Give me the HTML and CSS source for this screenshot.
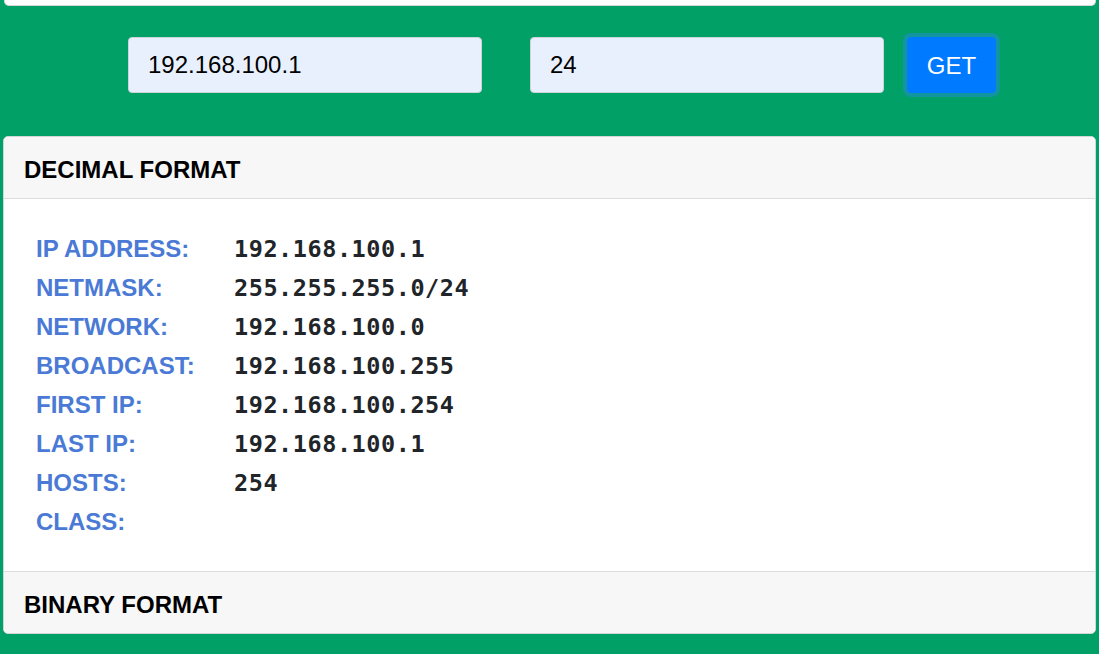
FILE: index.html
```html
<!DOCTYPE html>
<html lang="en">
<head>
<meta charset="utf-8">
<title>IP Calculator</title>
<link rel="stylesheet" href="styles.css">
</head>
<body>
<div class="page">
  <div class="top-card"></div>
  <form class="ip-form">
    <input class="field" type="text" value="192.168.100.1">
    <input class="field field-mask" type="text" value="24">
    <button class="btn-get" type="button">GET</button>
  </form>
  <div class="card">
    <div class="card-header">DECIMAL FORMAT</div>
    <div class="card-body">
      <div class="row"><span class="label">IP ADDRESS:</span><span class="value">192.168.100.1</span></div>
      <div class="row"><span class="label">NETMASK:</span><span class="value">255.255.255.0/24</span></div>
      <div class="row"><span class="label">NETWORK:</span><span class="value">192.168.100.0</span></div>
      <div class="row"><span class="label">BROADCAST:</span><span class="value">192.168.100.255</span></div>
      <div class="row"><span class="label">FIRST IP:</span><span class="value">192.168.100.254</span></div>
      <div class="row"><span class="label">LAST IP:</span><span class="value">192.168.100.1</span></div>
      <div class="row"><span class="label">HOSTS:</span><span class="value">254</span></div>
      <div class="row"><span class="label">CLASS:</span><span class="value"></span></div>
    </div>
    <div class="card-header card-header-bottom">BINARY FORMAT</div>
  </div>
</div>
</body>
</html>
```

FILE: styles.css
```css
html, body {
  margin: 0;
  padding: 0;
}

body {
  background: #00a067;
  font-family: "Liberation Sans", Arial, sans-serif;
  color: #212529;
}

.page {
  padding: 0 3px 20px 3px;
}

.top-card {
  height: 5px;
  margin-left: 1px;
  background: #ffffff;
  border: 1px solid #d5d8da;
  border-top: none;
  border-radius: 0 0 5px 5px;
}

.ip-form {
  display: flex;
  align-items: center;
  margin: 31px 0 43px 125px;
}

.field {
  box-sizing: border-box;
  width: 354px;
  height: 56px;
  padding: 0 19px;
  font-family: "Liberation Sans", Arial, sans-serif;
  font-size: 24px;
  color: #000000;
  background: #e8f0fe;
  border: 1px solid #ced4da;
  border-radius: 4px;
  outline: none;
}

.field-mask {
  margin-left: 48px;
}

.btn-get {
  box-sizing: border-box;
  width: 89px;
  height: 56px;
  margin-left: 23px;
  padding: 2px 0 0;
  font-family: "Liberation Sans", Arial, sans-serif;
  font-size: 24px;
  color: #ffffff;
  background: #007bff;
  border: 1px solid #007bff;
  border-radius: 4px;
  box-shadow: 0 0 0 4px rgba(30, 140, 200, 0.6);
}

.card {
  background: #ffffff;
  border: 1px solid #d2d6d8;
  border-radius: 5px;
  overflow: hidden;
}

.card-header {
  background: #f7f7f7;
  padding: 19px 19px 14px 20px;
  line-height: 28px;
  font-size: 24px;
  font-weight: bold;
  color: #000000;
  border-bottom: 1px solid #dcdcdc;
}

.card-header-bottom {
  border-bottom: none;
  border-top: 1px solid #dcdcdc;
}

.card-body {
  padding: 30px 31px 30px 32px;
}

.row {
  display: flex;
  align-items: baseline;
  line-height: 39px;
  height: 39px;
}

.label {
  width: 198px;
  flex: none;
  font-size: 24px;
  font-weight: bold;
  color: #4a7ad6;
}

.value {
  font-family: "DejaVu Sans Mono", "Liberation Mono", monospace;
  font-size: 23.5px;
  font-weight: bold;
  letter-spacing: 0.55px;
  color: #212529;
}
```
